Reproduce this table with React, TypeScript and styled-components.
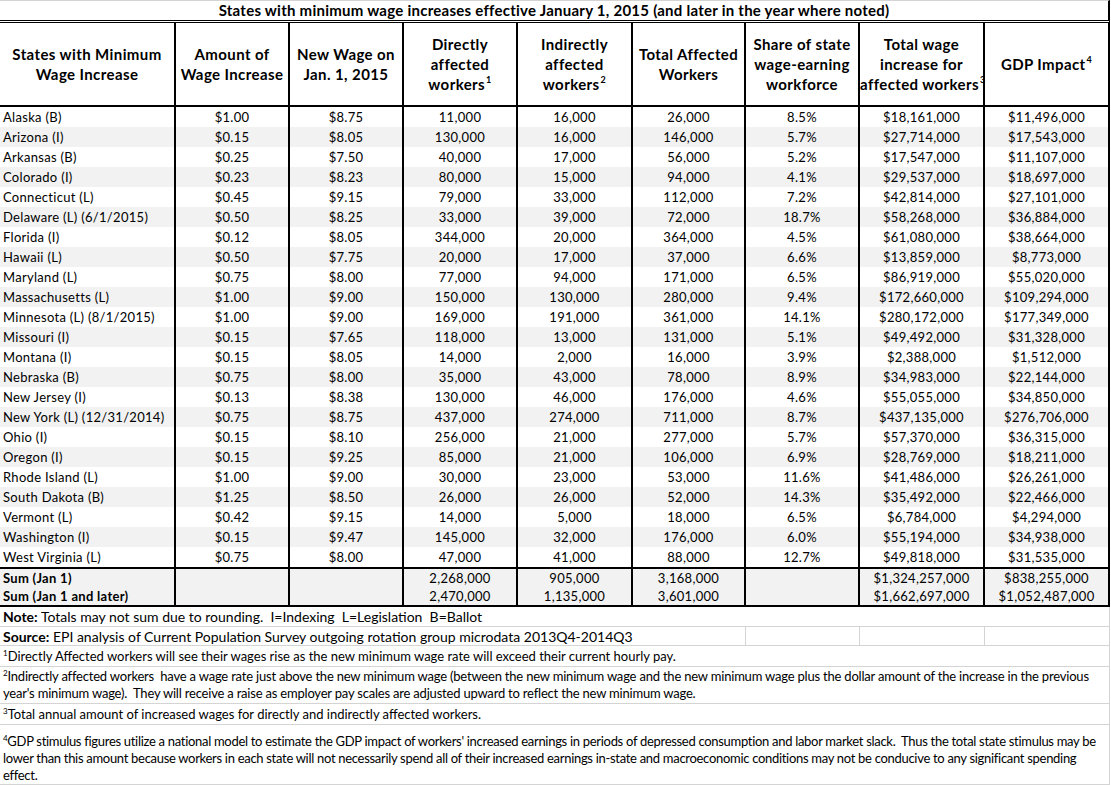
import React from 'react';
import styled, { createGlobalStyle } from 'styled-components';

const GlobalStyle = createGlobalStyle`
  html, body {
    margin: 0;
    padding: 0;
    background: #ffffff;
  }
  body {
    font-family: Lato, "Open Sans", "Liberation Sans", sans-serif;
    color: #000;
  }
`;

// Tabela principal, com larguras fixas das colunas
const Sheet = styled.table`
  border-collapse: separate;
  border-spacing: 0;
  table-layout: fixed;
  width: 1110px;

  th, td {
    box-sizing: border-box;
  }
`;

const Line = styled.tr<{ $h: number; $shade?: boolean }>`
  height: ${p => p.$h}px;
  background: ${p => (p.$shade ? '#f2f2f2' : '#ffffff')};
`;

const TitleCell = styled.th`
  padding: 0 0 1px;
  font-size: 15px;
  font-weight: 700;
  letter-spacing: 0.25px;
  text-align: center;
  white-space: nowrap;
  border-top: 1px solid #d4d4d4;
  border-bottom: 3px double #000;
  border-right: 2px solid #000;
`;

const HeadCell = styled.th`
  padding: 0;
  font-size: 15px;
  font-weight: 700;
  line-height: 20px;
  letter-spacing: 0.4px;
  text-align: center;
  vertical-align: middle;
  white-space: nowrap;
  border-bottom: 2px solid #000;
  border-right: 2px solid #000;
`;

const Sup = styled.sup`
  font-size: 9px;
  line-height: 0;
  vertical-align: 7px;
  margin-left: 1px;
`;

const Cell = styled.td<{ $first?: boolean; $bold?: boolean; $top?: boolean; $bottom?: boolean }>`
  padding: 0 3px;
  font-size: 13px;
  letter-spacing: 0.3px;
  white-space: nowrap;
  overflow: hidden;
  vertical-align: middle;
  font-weight: ${p => (p.$bold ? 700 : 400)};
  text-align: ${p => (p.$first ? 'left' : 'center')};
  border-right: 2px solid #000;
  border-top: ${p => (p.$top ? '2px solid #000' : '0')};
  border-bottom: ${p => (p.$bottom ? '2px solid #000' : '0')};
`;

const NoteCell = styled.td<{ $ls?: number; $small?: boolean; $bottomAlign?: boolean }>`
  padding: 0 3px;
  font-size: ${p => (p.$small ? '13px' : '14px')};
  line-height: 17px;
  letter-spacing: ${p => p.$ls ?? 0}px;
  white-space: nowrap;
  vertical-align: ${p => (p.$bottomAlign ? 'bottom' : 'middle')};
  border-bottom: 1px solid #d4d4d4;
  border-right: 1px solid #d4d4d4;
`;

const Label = styled.b`
  font-weight: 700;
`;

const NoteSup = styled.sup`
  font-size: 8px;
  line-height: 0;
  vertical-align: 5px;
`;

const widths = [176, 114, 114, 114, 115, 113, 114, 125, 125];

type StateRow = [string, string, string, string, string, string, string, string, string];

const rows: StateRow[] = [
  ['Alaska (B)', '$1.00', '$8.75', '11,000', '16,000', '26,000', '8.5%', '$18,161,000', '$11,496,000'],
  ['Arizona (I)', '$0.15', '$8.05', '130,000', '16,000', '146,000', '5.7%', '$27,714,000', '$17,543,000'],
  ['Arkansas (B)', '$0.25', '$7.50', '40,000', '17,000', '56,000', '5.2%', '$17,547,000', '$11,107,000'],
  ['Colorado (I)', '$0.23', '$8.23', '80,000', '15,000', '94,000', '4.1%', '$29,537,000', '$18,697,000'],
  ['Connecticut (L)', '$0.45', '$9.15', '79,000', '33,000', '112,000', '7.2%', '$42,814,000', '$27,101,000'],
  ['Delaware (L) (6/1/2015)', '$0.50', '$8.25', '33,000', '39,000', '72,000', '18.7%', '$58,268,000', '$36,884,000'],
  ['Florida (I)', '$0.12', '$8.05', '344,000', '20,000', '364,000', '4.5%', '$61,080,000', '$38,664,000'],
  ['Hawaii (L)', '$0.50', '$7.75', '20,000', '17,000', '37,000', '6.6%', '$13,859,000', '$8,773,000'],
  ['Maryland (L)', '$0.75', '$8.00', '77,000', '94,000', '171,000', '6.5%', '$86,919,000', '$55,020,000'],
  ['Massachusetts (L)', '$1.00', '$9.00', '150,000', '130,000', '280,000', '9.4%', '$172,660,000', '$109,294,000'],
  ['Minnesota (L) (8/1/2015)', '$1.00', '$9.00', '169,000', '191,000', '361,000', '14.1%', '$280,172,000', '$177,349,000'],
  ['Missouri (I)', '$0.15', '$7.65', '118,000', '13,000', '131,000', '5.1%', '$49,492,000', '$31,328,000'],
  ['Montana (I)', '$0.15', '$8.05', '14,000', '2,000', '16,000', '3.9%', '$2,388,000', '$1,512,000'],
  ['Nebraska (B)', '$0.75', '$8.00', '35,000', '43,000', '78,000', '8.9%', '$34,983,000', '$22,144,000'],
  ['New Jersey (I)', '$0.13', '$8.38', '130,000', '46,000', '176,000', '4.6%', '$55,055,000', '$34,850,000'],
  ['New York (L) (12/31/2014)', '$0.75', '$8.75', '437,000', '274,000', '711,000', '8.7%', '$437,135,000', '$276,706,000'],
  ['Ohio (I)', '$0.15', '$8.10', '256,000', '21,000', '277,000', '5.7%', '$57,370,000', '$36,315,000'],
  ['Oregon (I)', '$0.15', '$9.25', '85,000', '21,000', '106,000', '6.9%', '$28,769,000', '$18,211,000'],
  ['Rhode Island (L)', '$1.00', '$9.00', '30,000', '23,000', '53,000', '11.6%', '$41,486,000', '$26,261,000'],
  ['South Dakota (B)', '$1.25', '$8.50', '26,000', '26,000', '52,000', '14.3%', '$35,492,000', '$22,466,000'],
  ['Vermont (L)', '$0.42', '$9.15', '14,000', '5,000', '18,000', '6.5%', '$6,784,000', '$4,294,000'],
  ['Washington (I)', '$0.15', '$9.47', '145,000', '32,000', '176,000', '6.0%', '$55,194,000', '$34,938,000'],
  ['West Virginia (L)', '$0.75', '$8.00', '47,000', '41,000', '88,000', '12.7%', '$49,818,000', '$31,535,000'],
];

const sums: StateRow[] = [
  ['Sum (Jan 1)', '', '', '2,268,000', '905,000', '3,168,000', '', '$1,324,257,000', '$838,255,000'],
  ['Sum (Jan 1 and later)', '', '', '2,470,000', '1,135,000', '3,601,000', '', '$1,662,697,000', '$1,052,487,000'],
];

const headers: React.ReactNode[] = [
  <>States with Minimum<br />Wage Increase</>,
  <>Amount of<br />Wage Increase</>,
  <>New Wage on<br />Jan. 1, 2015</>,
  <>Directly<br />affected<br />workers<Sup>1</Sup></>,
  <>Indirectly<br />affected<br />workers<Sup>2</Sup></>,
  <>Total Affected<br />Workers</>,
  <>Share of state<br />wage-earning<br />workforce</>,
  <>Total wage<br />increase for<br />affected workers<Sup>3</Sup></>,
  <>GDP Impact<Sup>4</Sup></>,
];

const App: React.FC = () => {
  return (
    <>
      <GlobalStyle />
      <Sheet>
        <colgroup>
          {widths.map((w, i) => (
            <col key={i} style={{ width: w }} />
          ))}
        </colgroup>
        <thead>
          <Line $h={23}>
            <TitleCell colSpan={9}>
              States with minimum wage increases effective January 1, 2015 (and later in the year where noted)
            </TitleCell>
          </Line>
          <Line $h={84}>
            {headers.map((h, i) => (
              <HeadCell key={i}>{h}</HeadCell>
            ))}
          </Line>
        </thead>
        <tbody>
          {rows.map((r, ri) => (
            <Line key={r[0]} $h={20} $shade={ri % 2 === 1}>
              {r.map((v, ci) => (
                <Cell key={ci} $first={ci === 0}>
                  {v}
                </Cell>
              ))}
            </Line>
          ))}
          {sums.map((r, ri) => (
            <Line key={r[0]} $h={20} $shade>
              {r.map((v, ci) => (
                <Cell key={ci} $first={ci === 0} $bold={ci === 0} $top={ri === 0} $bottom={ri === 1}>
                  {v}
                </Cell>
              ))}
            </Line>
          ))}
        </tbody>
        <tfoot>
          <Line $h={20}>
            <NoteCell colSpan={9}>
              <Label>Note:</Label> Totals may not sum due to rounding.&nbsp; I=Indexing&nbsp; L=Legislation&nbsp; B=Ballot
            </NoteCell>
          </Line>
          <Line $h={19}>
            <NoteCell colSpan={6}>
              <Label>Source:</Label> EPI analysis of Current Population Survey outgoing rotation group microdata 2013Q4-2014Q3
            </NoteCell>
            <NoteCell />
            <NoteCell />
            <NoteCell />
          </Line>
          <Line $h={21}>
            <NoteCell colSpan={9} $small>
              <NoteSup>1</NoteSup>Directly Affected workers will see their wages rise as the new minimum wage rate will exceed their current hourly pay.
            </NoteCell>
          </Line>
          <Line $h={37}>
            <NoteCell colSpan={9} $small $ls={-0.2}>
              <NoteSup>2</NoteSup>Indirectly affected workers&nbsp; have a wage rate just above the new minimum wage (between the new minimum wage and the new minimum wage plus the dollar amount of the increase in the previous
              <br />
              year's minimum wage).&nbsp; They will receive a raise as employer pay scales are adjusted upward to reflect the new minimum wage.
            </NoteCell>
          </Line>
          <Line $h={21}>
            <NoteCell colSpan={9} $small>
              <NoteSup>3</NoteSup>Total annual amount of increased wages for directly and indirectly affected workers.
            </NoteCell>
          </Line>
          <Line $h={60}>
            <NoteCell colSpan={9} $small $ls={-0.3} $bottomAlign>
              <NoteSup>4</NoteSup>GDP stimulus figures utilize a national model to estimate the GDP impact of workers' increased earnings in periods of depressed consumption and labor market slack.&nbsp; Thus the total state stimulus may be
              <br />
              lower than this amount because workers in each state will not necessarily spend all of their increased earnings in-state and macroeconomic conditions may not be conducive to any significant spending
              <br />
              effect.
            </NoteCell>
          </Line>
        </tfoot>
      </Sheet>
    </>
  );
};

export default App;
